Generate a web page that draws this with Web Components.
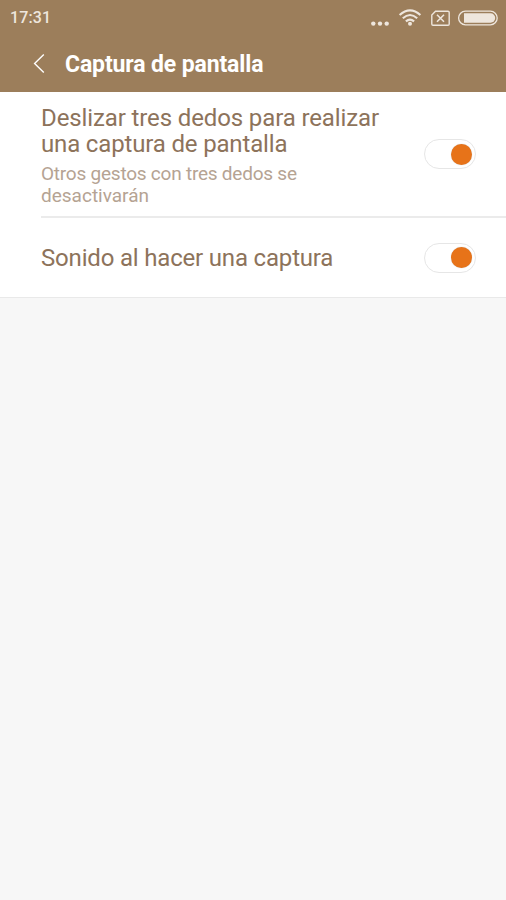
<!DOCTYPE html>
<html lang="es">
<head>
<meta charset="utf-8">
<title>Captura de pantalla</title>
<style>
html,body{margin:0;height:100%}
body{background:#f7f7f7;font-family:Roboto,"Liberation Sans",sans-serif;overflow:hidden}
</style>
</head>
<body>
<settings-screen></settings-screen>
<script>
function define(name, html){
  const t=document.createElement('template');
  t.innerHTML=html;
  customElements.define(name,class extends HTMLElement{
    constructor(){super();this.attachShadow({mode:'open'}).append(t.content.cloneNode(true));}
  });
}

define('status-bar',`<style>
:host{display:flex;height:36px;box-sizing:border-box;padding:0 8px 0 10px;color:#eee6dd;justify-content:space-between}
time{font-size:16px;line-height:36px;font-weight:500;letter-spacing:.1px}
svg{display:block}
</style>
<time>17:31</time>
<svg width="128" height="36" viewBox="370 0 128 36" fill="none" stroke="#eee6dd">
<g fill="#eee6dd" stroke="none"><circle cx="373.3" cy="23.6" r="2.2"/><circle cx="380" cy="23.6" r="2.2"/><circle cx="386.7" cy="23.6" r="2.2"/><circle cx="410" cy="23.7" r="2"/></g>
<g stroke-width="2.1"><path d="M399.6 15Q410 5.8 420.4 15"/><path d="M402.8 18.3Q410 11.7 417.2 18.3"/><path d="M405.9 21.4Q410 17.7 414.1 21.4"/></g>
<path d="M435.5 11.2H448a1.2 1.2 0 0 1 1.2 1.2V24a1.2 1.2 0 0 1-1.2 1.2H433a1.2 1.2 0 0 1-1.2-1.2V15Z" stroke-width="1.4"/>
<path d="M437 14.8L444 21.8M444 14.8L437 21.8" stroke-width="1.6"/>
<rect x="458.6" y="11.2" width="38.6" height="13.6" rx="6.8" stroke-width="1.3"/>
<path d="M464 13.3H490.5a4.7 4.7 0 0 1 0 9.4H464Z" fill="#eee6dd" stroke="none"/>
</svg>`);

define('title-bar',`<style>
:host{display:flex;height:56px;align-items:center;padding-left:33px;box-sizing:border-box;color:#fff}
svg{display:block;flex:none}
h1{margin:0 0 0 20px;padding-top:2px;font-size:23px;line-height:28px;font-weight:700;white-space:nowrap;letter-spacing:-.13px}
</style>
<svg width="12" height="20" viewBox="0 0 12 20" fill="none" stroke="#fff" stroke-width="1.4"><path d="M10.8 .5L1.6 9.5L10.8 18.5"/></svg>
<h1><slot></slot></h1>`);

define('toggle-switch',`<style>
:host{display:flex;box-sizing:border-box;width:52px;height:30px;border:1px solid #e6e6e6;border-radius:15px;align-items:center;justify-content:flex-end;padding-right:3px;background:#fff;flex:none}
i{width:21px;height:21px;border-radius:50%;background:#e77319;box-shadow:0 0 1px #7777}
</style><i></i>`);

define('setting-row',`<style>
:host{display:flex;align-items:center;justify-content:space-between;box-sizing:border-box;margin-left:41px;padding-right:30px;height:var(--row-h)}
.title{font-size:24px;line-height:26px;color:#8d735b}
.sub{font-size:19px;line-height:22.5px;color:#b5a393;padding-top:var(--sub-gap,0)}
.text{padding-top:var(--text-shift,0)}
</style>
<div class="text"><div class="title"><slot></slot></div><div class="sub"><slot name="summary"></slot></div></div>
<toggle-switch></toggle-switch>`);

define('settings-screen',`<style>
:host{display:block}
header{background:#9c7e5b;height:92px}
main{background:#fff;border-bottom:1px solid #e9e9e9;height:205px}
.first{--row-h:124px;--sub-gap:6px;--text-shift:4px}
.second{--row-h:79px}
hr{border:0;height:2px;background:#ebebeb;margin:0 0 0 41px}
.l{display:block;white-space:nowrap}
.a{letter-spacing:-.12px}.b{letter-spacing:-.16px}.c{letter-spacing:-.23px}.e{letter-spacing:-.18px}
</style>
<header><status-bar></status-bar><title-bar>Captura de pantalla</title-bar></header>
<main>
<setting-row class="first"><span class="l a">Deslizar tres dedos para realizar</span><span class="l b">una captura de pantalla</span><span slot="summary" class="l c">Otros gestos con tres dedos se</span><span slot="summary" class="l d">desactivarán</span></setting-row>
<hr>
<setting-row class="second"><span class="l e">Sonido al hacer una captura</span></setting-row>
</main>`);
</script>
</body>
</html>
